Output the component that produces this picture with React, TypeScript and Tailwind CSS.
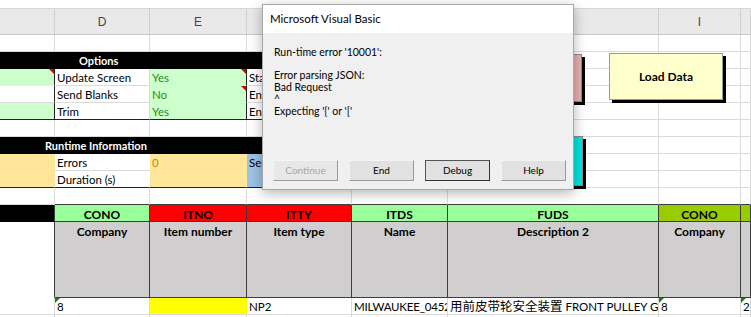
import type { ReactNode } from "react";
import { twMerge } from "tailwind-merge";

// column widths C..J
const W = {
  C: "w-[55px]",
  D: "w-[95px]",
  E: "w-[97px]",
  F: "w-[105px]",
  G: "w-[96px]",
  H: "w-[211px]",
  I: "w-[82px]",
  J: "w-[10px]",
};

const DARK = "border-r-[#3d3d3d] border-b-[#3d3d3d]";

function Cell({
  w,
  className,
  children,
}: {
  w: string;
  className?: string;
  children?: ReactNode;
}) {
  return (
    <div
      className={twMerge(
        "relative shrink-0 h-full overflow-hidden whitespace-nowrap px-[2px] pt-px leading-[15px] border-r border-b border-[#dadada] bg-white",
        w,
        className
      )}
    >
      {children}
    </div>
  );
}

function Row({ h = "h-[17px]", children }: { h?: string; children: ReactNode }) {
  return <div className={twMerge("flex", h)}>{children}</div>;
}

function RedMark() {
  return (
    <span className="absolute right-0 top-0 w-0 h-0 border-t-[5px] border-l-[5px] border-t-[#e00000] border-l-transparent" />
  );
}

function GreenMark() {
  return (
    <span className="absolute left-0 top-0 w-0 h-0 border-t-[5px] border-r-[5px] border-t-[#1e7b1e] border-r-transparent" />
  );
}

function EmptyRow({ dark }: { dark?: boolean }) {
  const b = dark ? "border-b-[#3d3d3d]" : "";
  return (
    <Row>
      <Cell w={W.C} />
      <Cell w={W.D} className={b} />
      <Cell w={W.E} className={b} />
      <Cell w={W.F} className={b} />
      <Cell w={W.G} className={b} />
      <Cell w={W.H} className={b} />
      <Cell w={W.I} className={b} />
      <Cell w={W.J} className={b} />
    </Row>
  );
}

function Tail() {
  return (
    <>
      <Cell w={W.H} />
      <Cell w={W.I} />
      <Cell w={W.J} />
    </>
  );
}

function DlgButton({ label, disabled, primary }: { label: string; disabled?: boolean; primary?: boolean }) {
  return (
    <div
      className={twMerge(
        "w-[65px] h-[21px] flex items-center justify-center text-[10px] bg-[#e1e1e1] border border-t-[#f4f4f4] border-l-[#f4f4f4] border-r-[#9a9a9a] border-b-[#9a9a9a] text-black",
        disabled && "text-[#a6a6a6] bg-[#e8e8e8]",
        primary && "border-[#555] border-t-[#555] border-l-[#555] border-r-[#333] border-b-[#333]"
      )}
    >
      {label}
    </div>
  );
}

export default function App() {
  const yes = "bg-[#ccffcc] border-transparent text-[#2a8a2a]";
  const green = "bg-[#ccffcc] border-transparent";
  const tan = "bg-[#ffe699] border-transparent";
  const blue = "bg-[#9dc3e6] border-transparent";
  const black = "bg-black border-transparent text-white font-bold";
  const hd = "font-bold text-center text-[12px] " + DARK;

  return (
    <div className="relative w-[751px] h-[317px] overflow-hidden bg-white text-[11.5px] text-black font-['Lato','Noto_Sans_CJK_SC',sans-serif]">
      {/* strip above column letters */}
      <div className="h-[9px] bg-white border-b border-[#d6d6d6]" />

      {/* column letters */}
      <div className="flex h-[26px] bg-[#e9e9e9] border-b border-[#c9c9c9] text-[12px] text-[#444] font-['Liberation_Sans',sans-serif]">
        {[
          [W.C, ""],
          [W.D, "D"],
          [W.E, "E"],
          [W.F, "F"],
          [W.G, "G"],
          [W.H, "H"],
          [W.I, "I"],
          [W.J, ""],
        ].map(([w, l], i) => (
          <div key={i} className={twMerge("shrink-0 h-full flex items-end justify-center pb-[3px] border-r border-[#cfcfcf]", w)}>
            {l}
          </div>
        ))}
      </div>

      <EmptyRow />

      {/* Options */}
      <Row>
        <div className="w-[448px] shrink-0 h-full bg-black text-white font-bold text-[11px] pl-[79px] pt-px leading-[15px]">Options</div>
        <Tail />
      </Row>
      <Row>
        <Cell w={W.C} className={green + " border-r-[#222]"}>
          <RedMark />
        </Cell>
        <Cell w={W.D}>Update Screen</Cell>
        <Cell w={W.E} className={yes + " border-r-[#222]"}>
          Yes
          <RedMark />
        </Cell>
        <Cell w={W.F}>Start Row</Cell>
        <Cell w={W.G} />
        <Tail />
      </Row>
      <Row>
        <Cell w={W.C} className="border-r-[#222]" />
        <Cell w={W.D}>Send Blanks</Cell>
        <Cell w={W.E} className={yes + " border-r-[#222]"}>
          No
          <RedMark />
        </Cell>
        <Cell w={W.F}>End Row</Cell>
        <Cell w={W.G} />
        <Tail />
      </Row>
      <Row>
        <Cell w={W.C} className={green + " border-r-[#222] border-b-[#222]"} />
        <Cell w={W.D} className="border-b-[#222]">Trim</Cell>
        <Cell w={W.E} className={yes + " border-r-[#222] border-b-[#222]"}>
          Yes
        </Cell>
        <Cell w={W.F} className="border-b-[#222]">End Column</Cell>
        <Cell w={W.G} className="border-b-[#222]" />
        <Tail />
      </Row>

      <EmptyRow />

      {/* Runtime Information */}
      <Row>
        <div className="w-[448px] shrink-0 h-full bg-black text-white font-bold text-[11px] pl-[45px] pt-px leading-[15px]">
          Runtime Information
        </div>
        <Tail />
      </Row>
      <Row>
        <Cell w={W.C} className={tan} />
        <Cell w={W.D} className="border-r-white">Errors</Cell>
        <Cell w={W.E} className={tan + " text-[#bf8f00]"}>0</Cell>
        <Cell w={W.F} className={blue}>Sent</Cell>
        <Cell w={W.G} className={blue} />
        <Tail />
      </Row>
      <Row>
        <Cell w={W.C} className={tan + " border-b-[#222]"} />
        <Cell w={W.D} className="border-r-white border-b-[#222]">Duration (s)</Cell>
        <Cell w={W.E} className={tan + " border-b-[#222]"} />
        <Cell w={W.F} className={blue + " border-b-[#222]"} />
        <Cell w={W.G} className={blue + " border-b-[#222]"} />
        <Tail />
      </Row>

      <EmptyRow dark />

      {/* table headers */}
      <Row>
        <Cell w={W.C} className={black + " border-r-[#3d3d3d]"} />
        <Cell w={W.D} className={"bg-[#99ff99] " + hd}>CONO</Cell>
        <Cell w={W.E} className={"bg-[#ff0000] " + hd}>ITNO</Cell>
        <Cell w={W.F} className={"bg-[#ff0000] " + hd}>ITTY</Cell>
        <Cell w={W.G} className={"bg-[#99ff99] " + hd}>ITDS</Cell>
        <Cell w={W.H} className={"bg-[#99ff99] " + hd}>FUDS</Cell>
        <Cell w={W.I} className={"bg-[#99cc00] " + hd}>CONO</Cell>
        <Cell w={W.J} className={"bg-[#99cc00] " + hd} />
      </Row>
      <Row h="h-[76px]">
        <Cell w={W.C} className="border-b-transparent border-r-[#3d3d3d]" />
        <Cell w={W.D} className={"bg-[#d0cece] " + hd}>Company</Cell>
        <Cell w={W.E} className={"bg-[#d0cece] " + hd}>Item number</Cell>
        <Cell w={W.F} className={"bg-[#d0cece] " + hd}>Item type</Cell>
        <Cell w={W.G} className={"bg-[#d0cece] " + hd}>Name</Cell>
        <Cell w={W.H} className={"bg-[#d0cece] " + hd}>Description 2</Cell>
        <Cell w={W.I} className={"bg-[#d0cece] " + hd}>Company</Cell>
        <Cell w={W.J} className={"bg-[#d0cece] " + hd} />
      </Row>

      {/* data row */}
      <Row>
        <Cell w={W.C} />
        <Cell w={W.D}>
          8
          <GreenMark />
        </Cell>
        <Cell w={W.E} className="bg-[#ffff00] border-r-transparent" />
        <Cell w={W.F}>NP2</Cell>
        <Cell w={W.G} className="tracking-[-0.2px]">MILWAUKEE_0452_FRONT</Cell>
        <Cell w={W.H}>
          <span className="text-[12.5px]">用前皮带轮安全装置</span> FRONT PULLEY GUARD
        </Cell>
        <Cell w={W.I}>
          8
          <GreenMark />
        </Cell>
        <Cell w={W.J}>
          20
          <GreenMark />
        </Cell>
      </Row>
      <EmptyRow />

      {/* sheet shapes */}
      <div className="absolute left-[540px] top-[54px] w-[42px] h-[48px] bg-[#e6b0b0] border border-[#8a8a8a] shadow-[3px_3px_0_#000]" />
      <div className="absolute left-[540px] top-[136px] w-[43px] h-[50px] bg-[#00e4e4] border border-[#8a8a8a] shadow-[3px_3px_0_#000]" />
      <div className="absolute left-[609px] top-[53px] w-[114px] h-[47px] bg-[#ffffcc] border border-[#9a9a9a] shadow-[3px_3px_0_#000] flex items-center justify-center font-bold text-[12px]">
        Load Data
      </div>

      {/* VBA error dialog */}
      <div className="absolute left-[262px] top-[4px] w-[312px] h-[186px] flex flex-col bg-[#f0f0f0] border border-[#a8a8a8] shadow-[0_3px_12px_rgba(0,0,0,0.3)] font-['Lato',sans-serif] text-[10.5px] text-black">
        <div className="h-[28px] shrink-0 bg-white flex items-center pl-[7px] text-[11.5px]">Microsoft Visual Basic</div>
        <div className="flex-1 flex flex-col pl-[11px] pt-[14px] leading-[11.7px]">
          <div>Run-time error '10001':</div>
          <div className="h-[11.7px]" />
          <div>Error parsing JSON:</div>
          <div>Bad Request</div>
          <div>^</div>
          <div>Expecting '{"{"}' or '['</div>
          <div className="mt-auto mb-[8px] -ml-px flex gap-[11px]">
            <DlgButton label="Continue" disabled />
            <DlgButton label="End" />
            <DlgButton label="Debug" primary />
            <DlgButton label="Help" />
          </div>
        </div>
      </div>
    </div>
  );
}
